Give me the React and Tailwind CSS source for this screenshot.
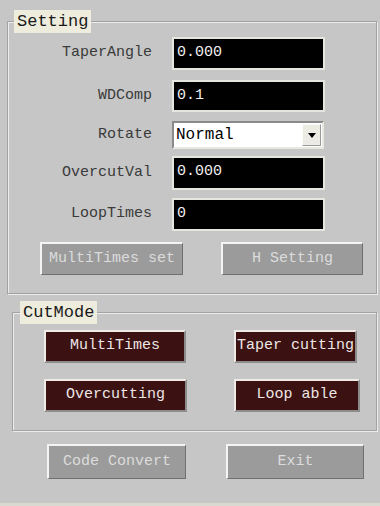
const mono = { fontFamily: '"Liberation Mono", "DejaVu Sans Mono", monospace' };

const fields = [
  { label: "TaperAngle", value: "0.000", mt: "mt-[4px]", h: "h-[33px]" },
  { label: "WDComp", value: "0.1", mt: "mt-[10px]", h: "h-[32px]" },
  { label: "Rotate", select: "Normal", mt: "mt-[9px]", h: "h-[28px]" },
  { label: "OvercutVal", value: "0.000", mt: "mt-[7px]", h: "h-[34px]" },
  { label: "LoopTimes", value: "0", mt: "mt-[8px]", h: "h-[33px]" },
];

function GrayButton({ children, className }) {
  return (
    <button
      className={`flex items-center justify-center bg-[#9b9b9b] text-[15px] text-[#dcdcdc] border-t-2 border-l-2 border-r border-b border-t-[#f4f4f4] border-l-[#f4f4f4] border-r-[#707070] border-b-[#707070] ${className}`}
    >
      {children}
    </button>
  );
}

function DarkButton({ children, className }) {
  return (
    <button
      className={`flex items-center justify-center h-[33px] bg-[#3c1111] text-[15px] text-[#ece6e6] border-2 border-t-[#eeeae6] border-l-[#eeeae6] border-r-[#8c8c8c] border-b-[#8c8c8c] ${className}`}
    >
      {children}
    </button>
  );
}

function Field({ label, value, select, mt, h }) {
  return (
    <div className={`flex flex-row items-center ${mt}`}>
      <span className="w-[144px] text-right text-[15px] text-[#3a3a3a]">{label}</span>
      {select ? (
        <div className={`ml-[20px] flex flex-row items-center w-[152px] ${h} bg-white border-2 border-t-[#8a8a8a] border-l-[#8a8a8a] border-r-[#e8e8e0] border-b-[#e8e8e0]`}>
          <span className="flex-1 pl-[2px] text-[16px] text-black">{select}</span>
          <span className="flex items-center justify-center w-[19px] h-[22px] mr-[1px] bg-[#ecebe4] border border-t-[#fafafa] border-l-[#fafafa] border-r-[#9a9a9a] border-b-[#9a9a9a]">
            <svg width="8" height="5" viewBox="0 0 8 5">
              <path d="M0 0 H8 L4 5 Z" fill="#000" />
            </svg>
          </span>
        </div>
      ) : (
        <div className={`ml-[20px] w-[153px] ${h} bg-black border-2 border-[#e6e6de] pl-[3px] pt-[3px] text-[15px] text-[#f0f0f0]`}>
          {value}
        </div>
      )}
    </div>
  );
}

const groupBox =
  "border border-[#a2a2a2] shadow-[inset_1px_1px_0_#ececec,1px_1px_0_#ececec]";

const legendBox = "h-[23px] px-[3px] bg-[#eeecdc] text-[17px] leading-[23px] text-[#1a1a1a]";

export default function App() {
  return (
    <div
      className="flex flex-col w-[380px] h-[506px] bg-[#c6c6c6] pt-[10px] pl-[7px] border-b-[3px] border-[#d9d9d2] overflow-hidden"
      style={mono}
    >
      <fieldset className={`w-[370px] pb-[18px] ${groupBox}`}>
        <legend className={`ml-[6px] ${legendBox}`}>Setting</legend>
        {fields.map((f) => (
          <Field key={f.label} {...f} />
        ))}
        <div className="flex flex-row mt-[11px] ml-[32px] gap-[38px]">
          <GrayButton className="w-[143px] h-[33px]">MultiTimes set</GrayButton>
          <GrayButton className="w-[142px] h-[33px]">H Setting</GrayButton>
        </div>
      </fieldset>

      <fieldset className={`mt-[7px] ml-[5px] w-[365px] pb-[18px] ${groupBox}`}>
        <legend className={`ml-[7px] h-[22px] leading-[22px] ${legendBox}`}>CutMode</legend>
        <div className="flex flex-row mt-[6px] ml-[31px] gap-[48px]">
          <DarkButton className="w-[142px]">MultiTimes</DarkButton>
          <DarkButton className="w-[123px]">Taper cutting</DarkButton>
        </div>
        <div className="flex flex-row mt-[16px] ml-[31px] gap-[47px]">
          <DarkButton className="w-[143px]">Overcutting</DarkButton>
          <DarkButton className="w-[126px]">Loop able</DarkButton>
        </div>
      </fieldset>

      <div className="flex flex-row mt-[13px] ml-[40px] gap-[40px]">
        <GrayButton className="w-[139px] h-[35px]">Code Convert</GrayButton>
        <GrayButton className="w-[138px] h-[35px]">Exit</GrayButton>
      </div>
    </div>
  );
}
